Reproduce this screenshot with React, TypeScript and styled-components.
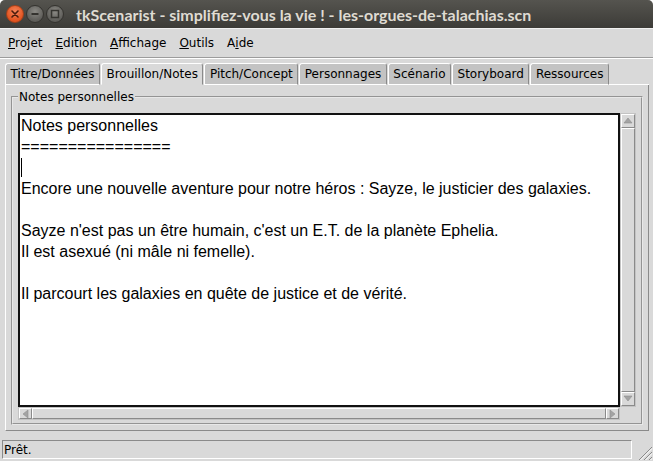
import styled, { createGlobalStyle } from "styled-components";

const GlobalStyle = createGlobalStyle`
  html, body {
    margin: 0;
    padding: 0;
  }
  body {
    width: 653px;
    height: 461px;
    overflow: hidden;
    background: #ffffff;
    font-family: "DejaVu Sans", sans-serif;
    font-size: 12px;
    color: #000;
  }
`;

const Window = styled.div`
  width: 653px;
  height: 461px;
  display: flex;
  flex-direction: column;
  background: #d9d9d9;
  border-radius: 5px 5px 0 0;
  overflow: hidden;
`;

const TitleBar = styled.div`
  height: 28px;
  flex: none;
  display: flex;
  align-items: center;
  padding-left: 6px;
  gap: 2px;
  background: linear-gradient(#55544f, #3c3b37);
`;

const WinButton = styled.div<{ $close?: boolean }>`
  width: 18px;
  height: 18px;
  border-radius: 50%;
  box-sizing: border-box;
  display: flex;
  align-items: center;
  justify-content: center;
  border: 1px solid ${(p) => (p.$close ? "#a5401a" : "#34332f")};
  background: ${(p) =>
    p.$close
      ? "radial-gradient(circle at 50% 35%, #f4845a, #e2531f 70%)"
      : "radial-gradient(circle at 50% 35%, #8a8984, #5e5d59 70%)"};
`;

const Title = styled.div`
  margin-left: 10px;
  font-family: "Lato", "DejaVu Sans", sans-serif;
  font-weight: bold;
  font-size: 16px;
  color: #dfdbd2;
  white-space: nowrap;
`;

const MenuBar = styled.div`
  flex: none;
  display: flex;
  align-items: center;
  padding-left: 1.5px;
  border-top: 1px solid #f0f0f0;
  border-bottom: 1px solid #9c9c9c;
  box-shadow: 0 1px 0 #ffffff;
  box-sizing: border-box;
  height: 30px;
`;

const MenuItem = styled.div`
  padding: 0 6.5px;
`;

const Mnemonic = styled.span`
  text-decoration: underline;
`;

const Notebook = styled.div`
  flex: 1;
  display: flex;
  flex-direction: column;
  padding: 5px 4px 0 5px;
  min-height: 0;
`;

const TabRow = styled.div`
  display: flex;
  height: 22px;
  flex: none;
`;

const Tab = styled.div<{ $active?: boolean }>`
  box-sizing: border-box;
  height: 22px;
  padding: 0 4.5px;
  margin-right: 1px;
  display: flex;
  align-items: center;
  white-space: nowrap;
  background: ${(p) => (p.$active ? "#d9d9d9" : "#c3c3c3")};
  border-top: 1px solid #ffffff;
  border-left: 1px solid #ffffff;
  border-right: 1px solid #8a8a8a;
  border-bottom: 1px solid ${(p) => (p.$active ? "#d9d9d9" : "#ffffff")};
  border-radius: 3px 3px 0 0;
`;

const TabFiller = styled.div`
  flex: 1;
  border-bottom: 1px solid #ffffff;
  margin-left: -1px;
`;

const Pane = styled.div`
  flex: 1;
  display: flex;
  padding: 5px;
  border-left: 1px solid #ffffff;
  border-right: 1px solid #8a8a8a;
  border-bottom: 1px solid #8a8a8a;
  min-height: 0;
`;

const LabelFrame = styled.fieldset`
  flex: 1;
  margin: 0;
  padding: 9px 5px 3px 5px;
  border: 2px groove #e8e8e8;
  display: flex;
  min-width: 0;
  min-height: 0;
`;

const Legend = styled.legend`
  padding: 0 1px;
  font-size: 12px;
`;

const EditorGrid = styled.div`
  flex: 1;
  display: grid;
  grid-template-columns: 1fr 16px;
  grid-template-rows: 1fr 13px;
  min-height: 0;
`;

const TextArea = styled.div`
  border: 2px solid #111;
  background: #ffffff;
  padding: 0 1px;
  font-family: "Liberation Sans", Arial, sans-serif;
  font-size: 16px;
  line-height: 21px;
  color: #000;
  overflow: hidden;
  white-space: pre;
`;

const Line = styled.div`
  height: 21px;
`;

const Caret = styled.span`
  display: inline-block;
  width: 1px;
  height: 19px;
  margin-top: 1px;
  background: #000;
  vertical-align: top;
`;

const ScrollBar = styled.div<{ $vertical?: boolean }>`
  display: flex;
  flex-direction: ${(p) => (p.$vertical ? "column" : "row")};
  background: #c3c3c3;
  border: 1px solid #c3c3c3;
  box-sizing: border-box;
`;

const ScrollArrow = styled.div<{ $vertical?: boolean }>`
  flex: none;
  width: ${(p) => (p.$vertical ? "auto" : "11px")};
  height: ${(p) => (p.$vertical ? "12px" : "auto")};
  display: flex;
  align-items: center;
  justify-content: center;
  background: #d9d9d9;
  border-top: 1px solid #ffffff;
  border-left: 1px solid #ffffff;
  border-right: 1px solid #8a8a8a;
  border-bottom: 1px solid #8a8a8a;
`;

const ScrollThumb = styled.div`
  flex: 1;
  background: #d9d9d9;
  border-top: 1px solid #ffffff;
  border-left: 1px solid #ffffff;
  border-right: 1px solid #8a8a8a;
  border-bottom: 1px solid #8a8a8a;
`;

const Corner = styled.div`
  background: #d9d9d9;
`;

const StatusBar = styled.div`
  flex: none;
  display: flex;
  align-items: flex-end;
  gap: 3px;
  padding: 9px 0 0 2px;
`;

const StatusField = styled.div`
  flex: 1;
  height: 19px;
  box-sizing: border-box;
  display: flex;
  align-items: center;
  padding-left: 1px;
  margin-bottom: 2px;
  border-top: 1px solid #8a8a8a;
  border-left: 1px solid #8a8a8a;
  border-right: 1px solid #ffffff;
  border-bottom: 1px solid #ffffff;
`;

const Grip = styled.div`
  width: 18px;
  height: 21px;
  display: flex;
  align-items: flex-end;
`;

function Arrow({ dir }: { dir: "up" | "down" | "left" | "right" }) {
  const pts = {
    up: "1,7 5,2 9,7",
    down: "1,2 5,7 9,2",
    left: "7,1 2,5 7,9",
    right: "2,1 7,5 2,9",
  }[dir];
  return (
    <svg width="10" height="10" viewBox="0 0 10 10">
      <polygon points={pts} fill="#a3a3a3" stroke="#8e8e8e" strokeWidth="0.6" />
    </svg>
  );
}

const lines = [
  "Notes personnelles",
  "================",
  null,
  "Encore une nouvelle aventure pour notre héros : Sayze, le justicier des galaxies.",
  "",
  "Sayze n'est pas un être humain, c'est un E.T. de la planète Ephelia.",
  "Il est asexué (ni mâle ni femelle).",
  "",
  "Il parcourt les galaxies en quête de justice et de vérité.",
];

const menus: [string, string][] = [
  ["P", "rojet"],
  ["E", "dition"],
  ["A", "ffichage"],
  ["O", "utils"],
  ["Ai", "de"],
];

const tabs = [
  "Titre/Données",
  "Brouillon/Notes",
  "Pitch/Concept",
  "Personnages",
  "Scénario",
  "Storyboard",
  "Ressources",
];

export default function App() {
  return (
    <>
      <GlobalStyle />
      <Window>
        <TitleBar>
          <WinButton $close>
            <svg width="10" height="10" viewBox="0 0 10 10">
              <path d="M2 2 L8 8 M8 2 L2 8" stroke="#4a1c0c" strokeWidth="1.6" strokeLinecap="round" />
            </svg>
          </WinButton>
          <WinButton>
            <svg width="10" height="10" viewBox="0 0 10 10">
              <path d="M1.5 5 H8.5" stroke="#34332f" strokeWidth="2" />
            </svg>
          </WinButton>
          <WinButton>
            <svg width="10" height="10" viewBox="0 0 10 10">
              <rect x="1.5" y="1.5" width="7" height="7" fill="none" stroke="#34332f" strokeWidth="1.5" />
            </svg>
          </WinButton>
          <Title>tkScenarist - simplifiez-vous la vie ! - les-orgues-de-talachias.scn</Title>
        </TitleBar>

        <MenuBar>
          {menus.map(([m, rest]) =>
            m === "Ai" ? (
              <MenuItem key={m}>
                A<Mnemonic>i</Mnemonic>
                {rest}
              </MenuItem>
            ) : (
              <MenuItem key={m}>
                <Mnemonic>{m}</Mnemonic>
                {rest}
              </MenuItem>
            )
          )}
        </MenuBar>

        <Notebook>
          <TabRow>
            {tabs.map((t) => (
              <Tab key={t} $active={t === "Brouillon/Notes"}>
                {t}
              </Tab>
            ))}
            <TabFiller />
          </TabRow>
          <Pane>
            <LabelFrame>
              <Legend>Notes personnelles</Legend>
              <EditorGrid>
                <TextArea>
                  {lines.map((l, i) =>
                    l === null ? (
                      <Line key={i}>
                        <Caret />
                      </Line>
                    ) : (
                      <Line key={i}>{l}</Line>
                    )
                  )}
                </TextArea>
                <ScrollBar $vertical>
                  <ScrollArrow $vertical>
                    <Arrow dir="up" />
                  </ScrollArrow>
                  <ScrollThumb />
                  <ScrollArrow $vertical>
                    <Arrow dir="down" />
                  </ScrollArrow>
                </ScrollBar>
                <ScrollBar>
                  <ScrollArrow>
                    <Arrow dir="left" />
                  </ScrollArrow>
                  <ScrollThumb />
                  <ScrollArrow>
                    <Arrow dir="right" />
                  </ScrollArrow>
                </ScrollBar>
                <Corner />
              </EditorGrid>
            </LabelFrame>
          </Pane>
        </Notebook>

        <StatusBar>
          <StatusField>Prêt.</StatusField>
          <Grip>
            <svg width="18" height="18" viewBox="0 0 18 18">
              <path d="M17 4 L4 17 M17 9 L9 17 M17 14 L14 17" stroke="#8a8a8a" strokeWidth="1" />
              <path d="M17 5.5 L5.5 17 M17 10.5 L10.5 17 M17 15.5 L15.5 17" stroke="#ffffff" strokeWidth="1" />
            </svg>
          </Grip>
        </StatusBar>
      </Window>
    </>
  );
}
